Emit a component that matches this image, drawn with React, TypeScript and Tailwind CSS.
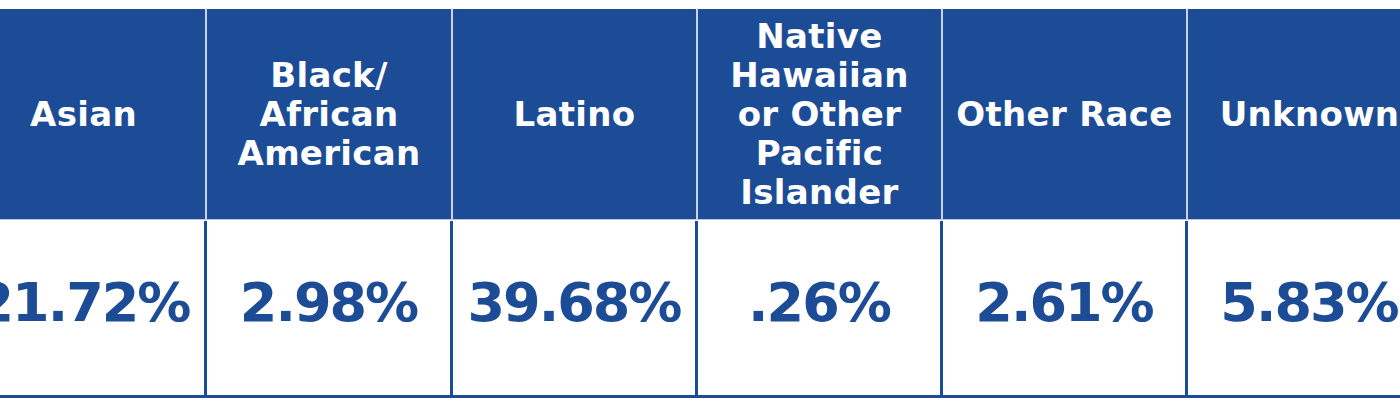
import React from "react";

const cols = [
  { head: ["Asian"], val: "21.72%", w: "w-[245px]" },
  { head: ["Black/", "African", "American"], val: "2.98%", w: "w-[246px]" },
  { head: ["Latino"], val: "39.68%", w: "w-[245px]" },
  { head: ["Native", "Hawaiian", "or Other", "Pacific", "Islander"], val: ".26%", w: "w-[245px]" },
  { head: ["Other Race"], val: "2.61%", w: "w-[245px]" },
  { head: ["Unknown"], val: "5.83%", w: "w-[245px]" },
];

export default function App() {
  return (
    <div
      className="w-[1400px] h-[408px] overflow-hidden bg-white"
      style={{ fontFamily: '"DejaVu Sans", "Liberation Sans", sans-serif' }}
    >
      <div className="ml-[-38px] mt-[9px] flex w-[1480px]">
        {cols.map((c, i) => (
          <div key={i} className={`flex flex-col shrink-0 ${c.w}`}>
            <div className="h-[210px] bg-[#1d4c97] border-r-2 border-r-[#c9d3ea] flex items-center justify-center">
              <div className="text-white font-bold text-[34px] leading-[39px] text-center tracking-[0.3px]">
                {c.head.map((l, j) => (
                  <div key={j}>{l}</div>
                ))}
              </div>
            </div>
            <div className="h-[1px] bg-[#b9c7e4]" />
            <div className="h-[174px] mt-[1px] border-r-[3px] border-r-[#1d4c97] flex items-center justify-center">
              <div className="text-[#1d4c97] font-bold text-[54px] tracking-[-2px] leading-none mt-[-10px]">
                {c.val}
              </div>
            </div>
            <div className="h-[3px] bg-[#1d4c97]" />
          </div>
        ))}
      </div>
    </div>
  );
}
